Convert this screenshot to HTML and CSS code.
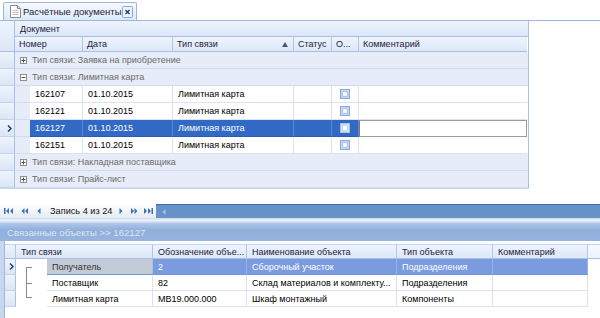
FILE: index.html
```html
<!DOCTYPE html>
<html>
<head>
<meta charset="utf-8">
<link rel="stylesheet" href="styles.css">
</head>
<body>
<div class="tabstrip">
  <div class="tab">
    <svg class="docicon" width="11" height="13" viewBox="0 0 11 13"><path d="M0.5 0.5H7.5L10.5 3.5V12.5H0.5Z" fill="#fff" stroke="#8a8a8a"/><path d="M7.5 0.5V3.5H10.5" fill="#e2e2e2" stroke="#8a8a8a"/><path d="M2.5 5.5H8.5M2.5 7.5H8.5M2.5 9.5H8.5" stroke="#bdbdbd"/></svg>
    <span class="tabtext">Расчётные документы</span>
    <svg class="close" width="11" height="12" viewBox="0 0 11 12"><rect x="0.5" y="0.5" width="10" height="11" rx="1" fill="#EDF3FC" stroke="#8DA6CB"/><path d="M3.5 4L7.5 8M7.5 4L3.5 8" stroke="#1E3A6E" stroke-width="1.4"/></svg>
  </div>
</div>

<div class="grid1">
  <div class="hdr">
    <div class="ind-top"></div>
    <div class="hdr-right">
      <div class="band">Документ</div>
      <div class="cols">
        <div class="hc w-num">Номер</div>
        <div class="hc w-date">Дата</div>
        <div class="hc w-type"><span>Тип связи</span><svg class="sort" width="6" height="5" viewBox="0 0 6 5"><path d="M0 5L3 0L6 5Z" fill="#4a5870"/></svg></div>
        <div class="hc w-stat">Статус</div>
        <div class="hc w-o">О...</div>
        <div class="hc w-comm">Комментарий</div>
      </div>
    </div>
  </div>

  <div class="row">
    <div class="ind"></div>
    <div class="gcell"><svg width="7" height="7" viewBox="0 0 7 7"><rect x="0.5" y="0.5" width="6" height="6" fill="#fff" stroke="#909090"/><path d="M1.5 3.5H5.5M3.5 1.5V5.5" stroke="#555"/></svg><span>Тип связи: Заявка на приобретение</span></div>
  </div>
  <div class="row">
    <div class="ind"></div>
    <div class="gcell"><svg width="7" height="7" viewBox="0 0 7 7"><rect x="0.5" y="0.5" width="6" height="6" fill="#fff" stroke="#909090"/><path d="M1.5 3.5H5.5" stroke="#555"/></svg><span>Тип связи: Лимитная карта</span></div>
  </div>

  <div class="row">
    <div class="ind"></div>
    <div class="indent"></div>
    <div class="dc w-num2">162107</div>
    <div class="dc w-date">01.10.2015</div>
    <div class="dc w-type">Лимитная карта</div>
    <div class="dc w-stat"></div>
    <div class="dc w-o chk"><svg width="10" height="10" viewBox="0 0 10 10"><rect x="0.5" y="0.5" width="9" height="9" fill="#C5D6F1" stroke="#8EA9D8"/><rect x="2.5" y="2.5" width="5" height="5" fill="#F3F7FD" stroke="#AFC4E8"/></svg></div>
    <div class="dc w-comm"></div>
  </div>
  <div class="row">
    <div class="ind"></div>
    <div class="indent"></div>
    <div class="dc w-num2">162121</div>
    <div class="dc w-date">01.10.2015</div>
    <div class="dc w-type">Лимитная карта</div>
    <div class="dc w-stat"></div>
    <div class="dc w-o chk"><svg width="10" height="10" viewBox="0 0 10 10"><rect x="0.5" y="0.5" width="9" height="9" fill="#C5D6F1" stroke="#8EA9D8"/><rect x="2.5" y="2.5" width="5" height="5" fill="#F3F7FD" stroke="#AFC4E8"/></svg></div>
    <div class="dc w-comm"></div>
  </div>
  <div class="row sel">
    <div class="ind"><svg width="5" height="7" viewBox="0 0 5 7"><path d="M1 0.5L4 3.5L1 6.5" fill="none" stroke="#1E3A6E" stroke-width="1.4"/></svg></div>
    <div class="indent"></div>
    <div class="dc w-num2">162127</div>
    <div class="dc w-date">01.10.2015</div>
    <div class="dc w-type">Лимитная карта</div>
    <div class="dc w-stat"></div>
    <div class="dc w-o chk"><svg width="10" height="10" viewBox="0 0 10 10"><rect x="0.5" y="0.5" width="9" height="9" fill="#D6E3F7" stroke="#A9C1E8"/><rect x="2.5" y="2.5" width="5" height="5" fill="#FFFFFF" stroke="#C7D7F1"/></svg></div>
    <div class="dc w-comm editor"></div>
  </div>
  <div class="row">
    <div class="ind"></div>
    <div class="indent"></div>
    <div class="dc w-num2">162151</div>
    <div class="dc w-date">01.10.2015</div>
    <div class="dc w-type">Лимитная карта</div>
    <div class="dc w-stat"></div>
    <div class="dc w-o chk"><svg width="10" height="10" viewBox="0 0 10 10"><rect x="0.5" y="0.5" width="9" height="9" fill="#C5D6F1" stroke="#8EA9D8"/><rect x="2.5" y="2.5" width="5" height="5" fill="#F3F7FD" stroke="#AFC4E8"/></svg></div>
    <div class="dc w-comm"></div>
  </div>

  <div class="row">
    <div class="ind"></div>
    <div class="gcell"><svg width="7" height="7" viewBox="0 0 7 7"><rect x="0.5" y="0.5" width="6" height="6" fill="#fff" stroke="#909090"/><path d="M1.5 3.5H5.5M3.5 1.5V5.5" stroke="#555"/></svg><span>Тип связи: Накладная поставщика</span></div>
  </div>
  <div class="row">
    <div class="ind"></div>
    <div class="gcell"><svg width="7" height="7" viewBox="0 0 7 7"><rect x="0.5" y="0.5" width="6" height="6" fill="#fff" stroke="#909090"/><path d="M1.5 3.5H5.5M3.5 1.5V5.5" stroke="#555"/></svg><span>Тип связи: Прайс-лист</span></div>
  </div>
</div>

<div class="gap1"></div>

<div class="nav">
  <div class="navleft">
    <span class="nb b1"><svg width="9" height="6" viewBox="0 0 9 6"><rect x="0" y="0" width="1.5" height="6" fill="#3B6DBF"/><path d="M5 0L2 3L5 6ZM9 0L6 3L9 6Z" fill="#3B6DBF"/></svg></span>
    <span class="nb b2"><svg width="7" height="6" viewBox="0 0 7 6"><path d="M3.5 0L0.5 3L3.5 6ZM7 0L4 3L7 6Z" fill="#3B6DBF"/></svg></span>
    <span class="nb b3"><svg width="4" height="6" viewBox="0 0 4 6"><path d="M3.5 0L0.5 3L3.5 6Z" fill="#3B6DBF"/></svg></span>
    <span class="navtext">Запись 4 из 24</span>
    <span class="nb b4"><svg width="4" height="6" viewBox="0 0 4 6"><path d="M0.5 0L3.5 3L0.5 6Z" fill="#3B6DBF"/></svg></span>
    <span class="nb b5"><svg width="7" height="6" viewBox="0 0 7 6"><path d="M0 0L3 3L0 6ZM3.5 0L6.5 3L3.5 6Z" fill="#3B6DBF"/></svg></span>
    <span class="nb b6"><svg width="9" height="6" viewBox="0 0 9 6"><path d="M0 0L3 3L0 6ZM4 0L7 3L4 6Z" fill="#3B6DBF"/><rect x="7.5" y="0" width="1.5" height="6" fill="#3B6DBF"/></svg></span>
  </div>
  <div class="navbar"><svg width="4" height="6" viewBox="0 0 4 6"><path d="M3.5 0L0.5 3L3.5 6Z" fill="#A9C2E6"/></svg></div>
</div>

<div class="splitter"></div>
<div class="panelhdr">Связанные объекты &gt;&gt; 162127</div>

<div class="lower">
  <div class="lframe"></div>
  <div class="lgrid">
    <div class="lrow lhdr">
      <div class="lhc l-ind"></div>
      <div class="lhc l-typeall">Тип связи</div>
      <div class="lhc l-obo">Обозначение объе...</div>
      <div class="lhc l-nam">Наименование объекта</div>
      <div class="lhc l-tip">Тип объекта</div>
      <div class="lhc l-com">Комментарий</div>
      <div class="lhc l-fill"></div>
    </div>
    <div class="lrow lsel">
      <div class="lind"><svg width="5" height="7" viewBox="0 0 5 7"><path d="M1 0.5L4 3.5L1 6.5" fill="none" stroke="#1E3A6E" stroke-width="1.4"/></svg></div>
      <div class="tree"><svg width="31" height="16" viewBox="0 0 31 16"><path d="M10.5 8V16M10.5 8.5H16" stroke="#8a8a8a"/></svg></div>
      <div class="lc l-type focus">Получатель</div>
      <div class="lc l-obo">2</div>
      <div class="lc l-nam">Сборочный участок</div>
      <div class="lc l-tip">Подразделения</div>
      <div class="lc l-com"></div>
    </div>
    <div class="lrow">
      <div class="lind"></div>
      <div class="tree"><svg width="31" height="16" viewBox="0 0 31 16"><path d="M10.5 0V16M10.5 8.5H16" stroke="#8a8a8a"/></svg></div>
      <div class="lc l-type">Поставщик</div>
      <div class="lc l-obo">82</div>
      <div class="lc l-nam">Склад материалов и комплекту...</div>
      <div class="lc l-tip">Подразделения</div>
      <div class="lc l-com"></div>
    </div>
    <div class="lrow">
      <div class="lind"></div>
      <div class="tree"><svg width="31" height="16" viewBox="0 0 31 16"><path d="M10.5 0V6.5M10.5 6.5H16" stroke="#8a8a8a"/></svg></div>
      <div class="lc l-type">Лимитная карта</div>
      <div class="lc l-obo">МВ19.000.000</div>
      <div class="lc l-nam">Шкаф монтажный</div>
      <div class="lc l-tip">Компоненты</div>
      <div class="lc l-com"></div>
    </div>
  </div>
</div>
</body>
</html>
```

FILE: styles.css
```css
* { box-sizing: border-box; }
body {
  margin: 0;
  width: 600px;
  height: 318px;
  overflow: hidden;
  background: #fff;
  font-family: "Liberation Sans", Arial, sans-serif;
  font-size: 9px;
  color: #000;
}
svg { display: block; flex: none; }

/* tab strip */
.tabstrip {
  height: 21px;
  border-bottom: 1px solid #9DB7DC;
  padding: 2px 0 0 3px;
  display: flex;
}
.tab {
  width: 134px;
  height: 18px;
  border: 1px solid #9DB7DC;
  border-bottom: none;
  border-radius: 2px 2px 0 0;
  background: linear-gradient(#F6F9FE, #DDE9F9);
  display: flex;
  align-items: center;
  padding: 0 3px 0 6px;
}
.tabtext { margin-left: 2px; color: #1b2438; font-size: 9.5px; }
.close { margin-left: auto; }

/* upper grid */
.grid1 {
  width: 529px;
  border-right: 1px solid #A9C0E2;
  border-bottom: 1px solid #C9D7EE;
}
.hdr { display: flex; }
.ind-top {
  width: 15px;
  height: 31px;
  border-right: 1px solid #A9C0E2;
  border-bottom: 1px solid #A9C0E2;
  background: linear-gradient(#EEF4FD, #DCE7F8);
}
.hdr-right { flex: 1; display: flex; flex-direction: column; }
.band {
  height: 16px;
  border-bottom: 1px solid #A9C0E2;
  background: linear-gradient(#EEF4FD, #DCE7F8);
  display: flex;
  align-items: center;
  padding-left: 5px;
  color: #1b2438;
}
.cols { display: flex; height: 15px; }
.hc {
  height: 15px;
  border-right: 1px solid #B1C6E6;
  border-bottom: 1px solid #A9C0E2;
  background: linear-gradient(#EEF4FD, #DCE7F8);
  display: flex;
  align-items: center;
  padding-left: 4px;
  color: #1b2438;
  white-space: nowrap;
  overflow: hidden;
}
.hc.w-comm { border-right: none; }
.w-type { justify-content: space-between; padding-right: 5px; }
.w-num { width: 68px; }
.w-num2 { width: 53px; }
.w-date { width: 90px; }
.w-type { width: 121px; }
.w-stat { width: 38px; }
.w-o { width: 27px; }
.w-comm { width: 168px; }

.row { display: flex; height: 17px; }
.ind {
  width: 15px;
  height: 17px;
  border-right: 1px solid #A9C0E2;
  border-bottom: 1px solid #C4D4EC;
  background: linear-gradient(#EEF4FD, #DAE6F7);
  display: flex;
  align-items: center;
  padding-left: 7px;
}
.gcell {
  flex: 1;
  background: #E6ECF8;
  border-bottom: 1px solid #D2DCF0;
  display: flex;
  align-items: center;
  padding-left: 5px;
  gap: 5px;
  color: #6b6b6b;
}
.indent {
  width: 15px;
  background: #E6ECF8;
  border-bottom: 1px solid #D2DCF0;
}
.dc {
  height: 17px;
  border-right: 1px solid #DAE3F4;
  border-bottom: 1px solid #DAE3F4;
  display: flex;
  align-items: center;
  padding-left: 5px;
  white-space: nowrap;
  overflow: hidden;
  background: #fff;
}
.dc.w-comm { border-right: none; }
.chk { justify-content: center; padding-left: 0; }
.sel .dc {
  background: #3169C5;
  color: #fff;
  border-right-color: #5B88D3;
  border-bottom-color: #2A5CB0;
}
.sel .dc.editor {
  background: #fff;
  border: 1px solid #9C9C9C;
  border-left-color: #7a7a7a;
}

.gap1 { height: 15px; }

/* navigator */
.nav { display: flex; height: 14px; }
.navleft {
  width: 156px;
  display: flex;
  align-items: center;
  background: linear-gradient(#FFFFFF, #E4EAF3);
}
.nb { height: 14px; display: flex; align-items: center; justify-content: center; }
.b1 { width: 17px; }
.b2 { width: 15px; }
.b3 { width: 13px; }
.navtext { width: 70px; padding-left: 5px; color: #111; font-size: 9.2px; }
.b4 { width: 12px; }
.b5 { width: 14px; }
.b6 { width: 15px; }
.navbar {
  flex: 1;
  background: #6791C9;
  border-top: 1px solid #3F6AAE;
  display: flex;
  align-items: center;
  padding-left: 6px;
}

.splitter {
  height: 5px;
  background: linear-gradient(#C9D9F0, #EEF3FB 45%, #C2D3EC);
}
.panelhdr {
  height: 18px;
  background: linear-gradient(#B0C7E8, #8FAFDB 40%, #97B4DE);
  color: #DCE6F5;
  display: flex;
  align-items: center;
  padding-left: 7px;
  font-size: 9.6px;
}

/* lower grid */
.lower { display: flex; height: 78px; }
.lframe {
  width: 5px;
  background: #C6D7EF;
  border-right: 1px solid #9FB7DB;
}
.lgrid { flex: 1; padding-top: 3px; }
.lrow { display: flex; height: 16px; }
.lhdr { height: 15px; }
.lhc {
  height: 15px;
  border-right: 1px solid #B1C6E6;
  border-top: 1px solid #C3D4EE;
  border-bottom: 1px solid #A9C0E2;
  background: linear-gradient(#EEF4FD, #DCE7F8);
  display: flex;
  align-items: center;
  padding-left: 5px;
  color: #1b2438;
  white-space: nowrap;
  overflow: hidden;
}
.lhc.l-fill { border-right: none; flex: 1; background: linear-gradient(#F6F9FE, #EAF1FB); }
.l-ind { width: 11px; }
.l-typeall { width: 137px; }
.l-type { width: 106px; }
.l-obo { width: 94px; }
.l-nam { width: 150px; }
.l-tip { width: 96px; }
.l-com { width: 95px; }
.lind {
  width: 11px;
  height: 16px;
  border-right: 1px solid #A9C0E2;
  border-bottom: 1px solid #C4D4EC;
  background: linear-gradient(#EEF4FD, #DAE6F7);
  display: flex;
  align-items: center;
  padding-left: 4px;
}
.tree { width: 31px; height: 16px; background: #fff; }
.lc {
  height: 16px;
  border-right: 1px solid #DAE3F4;
  border-bottom: 1px solid #DAE3F4;
  display: flex;
  align-items: center;
  padding-left: 5px;
  white-space: nowrap;
  overflow: hidden;
}
.lsel .lc {
  background: #7B9BE0;
  color: #fff;
  border-right-color: #98B1E8;
  border-bottom-color: #7393D8;
}
.lsel .lc.focus {
  background: #C3CBD7;
  color: #333;
  border-right-color: #B5BFCE;
}
```
